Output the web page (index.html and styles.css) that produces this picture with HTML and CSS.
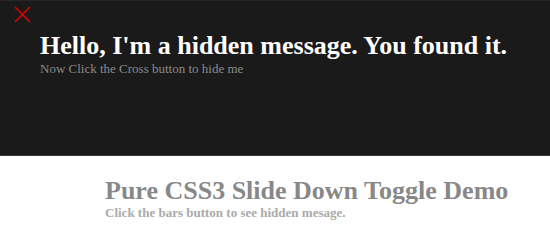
FILE: index.html
```html
<!DOCTYPE html>
<html>
<head>
<meta charset="utf-8">
<link rel="stylesheet" href="styles.css">
</head>
<body>
<div class="panel">
  <div class="close" aria-label="close">
    <svg width="17" height="17" viewBox="0 0 17 17"><path d="M1 1 L16 16 M16 1 L1 16" stroke="#e00000" stroke-width="1.6" fill="none"/></svg>
  </div>
  <div class="message">
    <h1 class="msg-title">Hello, I'm a hidden message. You found it.</h1>
    <p class="msg-sub">Now Click the Cross button to hide me</p>
  </div>
</div>
<div class="demo">
  <h2 class="demo-title">Pure CSS3 Slide Down Toggle Demo</h2>
  <p class="demo-sub">Click the bars button to see hidden mesage.</p>
</div>
</body>
</html>
```
FILE: styles.css
```css
html, body {
  margin: 0;
  padding: 0;
  background: #fff;
  font-family: "Liberation Serif", "Times New Roman", serif;
}
.panel {
  background: #1a1a1a;
  border-top: 1px solid #262626;
  border-bottom: 1px solid #3a3a3a;
  height: 154px;
  box-sizing: content-box;
  display: flex;
  flex-direction: column;
}
.close {
  margin: 5px 0 0 14px;
  width: 17px;
  height: 17px;
  line-height: 0;
}
.message {
  padding: 9px 0 0 40px;
}
.msg-title {
  margin: 0;
  color: #fff;
  font-size: 26px;
  font-weight: bold;
  line-height: 28px;
}
.msg-sub {
  margin: 1px 0 0;
  color: #8a8a8a;
  font-size: 13px;
  line-height: 16px;
}
.demo {
  padding: 21px 0 0 105px;
}
.demo-title {
  margin: 0;
  color: #888;
  font-size: 26px;
  font-weight: bold;
  line-height: 28px;
}
.demo-sub {
  margin: 0;
  color: #aaa;
  font-size: 13px;
  font-weight: bold;
  line-height: 16px;
}
```
